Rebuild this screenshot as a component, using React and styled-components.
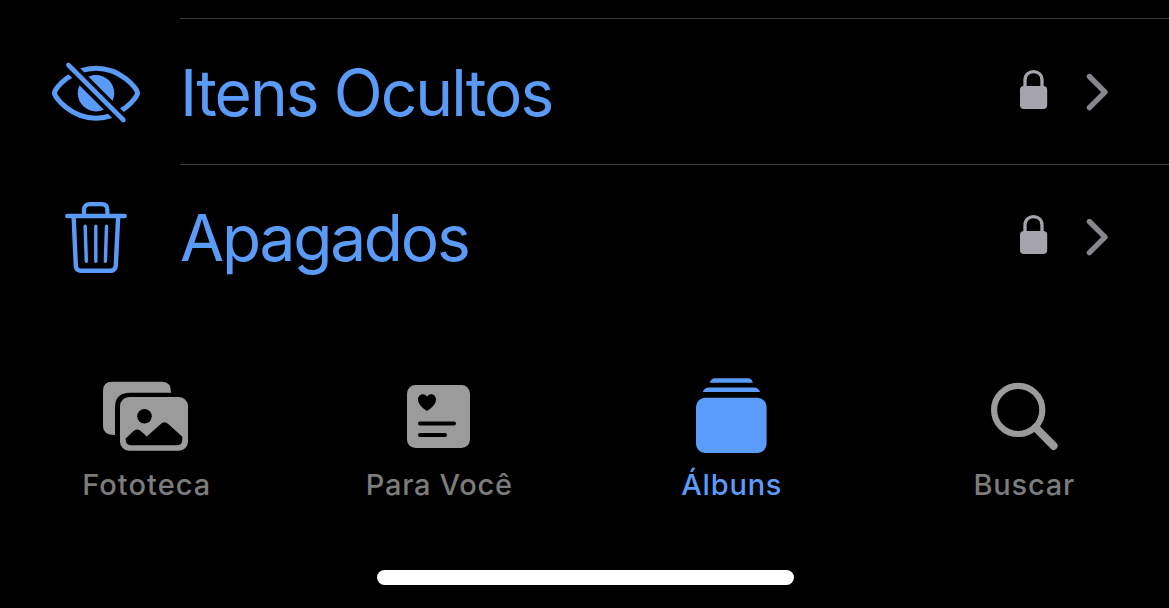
import React from "react";
import styled, { createGlobalStyle } from "styled-components";

const GlobalStyle = createGlobalStyle`
  body {
    margin: 0;
    background: #000;
    overflow: hidden;
  }
`;

const Screen = styled.div`
  display: flex;
  flex-direction: column;
  width: 1169px;
  height: 608px;
  overflow: hidden;
  background: #000;
  font-family: Inter, "Liberation Sans", sans-serif;
`;

const List = styled.div`
  height: 375px;
  padding-top: 18px;
  box-sizing: border-box;
`;

const Row = styled.div`
  display: flex;
  height: ${(props) => props.$height};
`;

const RowIcon = styled.div`
  display: flex;
  width: 180px;
  padding: 3px 0 0 48px;
  box-sizing: border-box;
  align-items: center;
`;

const RowBody = styled.div`
  display: flex;
  flex: 1;
  align-items: center;
  border-top: 1px solid #3a3a3c;
`;

const RowTitle = styled.div`
  flex: 1;
  font-size: 64px;
  line-height: 80px;
  letter-spacing: ${(props) => props.$spacing};
  padding-top: 3px;
  color: #5b9bf8;
  white-space: nowrap;
`;

const Accessory = styled.svg`
  display: block;
  margin-right: 55px;
`;

const TabBar = styled.div`
  display: grid;
  grid-template-columns: repeat(4, 292.5px);
  height: 195px;
`;

const Tab = styled.div`
  display: flex;
  flex-direction: column;
  align-items: center;
  color: ${(props) => (props.$active ? "#5b9bf9" : "#9b9b9b")};
`;

const TabLabel = styled.div`
  margin-top: 12px;
  font-size: 29px;
  line-height: 36px;
  letter-spacing: ${(props) => props.$spacing};
  margin-right: -1px;
  font-weight: 500;
  color: ${(props) => (props.$active ? "#5b9bf9" : "#7c7c7c")};
  white-space: nowrap;
`;

const HomeIndicator = styled.div`
  width: 417px;
  height: 15px;
  margin-left: 377px;
  border-radius: 8px;
  background: #fff;
`;

const Drawing = styled.svg`
  display: block;
`;

const HiddenIcon = () => (
  <Drawing width="96" height="80" viewBox="0 0 96 80" fill="none">
    <mask id="eyeCut">
      <rect width="96" height="80" fill="#fff" />
      <path d="M10 2L86 78" stroke="#000" strokeWidth="12.5" />
    </mask>
    <g mask="url(#eyeCut)">
      <path
        d="M6.5 40C6.5 35.5 23 15.2 48 15.2S89.5 35.5 89.5 40S73 65.2 48 65.2S6.5 44.5 6.5 40Z"
        stroke="#5b9bf8"
        strokeWidth="5"
      />
      <circle cx="48" cy="40.2" r="18.2" fill="#5b9bf8" />
    </g>
    <path d="M20.4 12L75.4 67" stroke="#5b9bf8" strokeWidth="4.6" strokeLinecap="round" />
  </Drawing>
);

const TrashIcon = () => (
  <Drawing width="96" height="80" viewBox="0 0 96 80" fill="none" stroke="#5b9bf8" strokeLinecap="round">
    <path d="M19.3 18H76.7" strokeWidth="4.4" />
    <path d="M36 18V12Q36 6.2 41.8 6.2H53.6Q59.4 6.2 59.4 12V18" strokeWidth="4.2" />
    <path
      d="M25.6 18L27.8 67.5Q28 72.8 33.4 72.8H62Q67.4 72.8 67.8 67.5L70.2 18"
      strokeWidth="4.4"
    />
    <path d="M37.2 28.2L38.3 63.2M47.8 28.2V63.2M58.5 28.2L57.4 63.2" strokeWidth="3.4" />
  </Drawing>
);

const LockAndChevron = () => (
  <Accessory width="94" height="50" viewBox="0 0 94 50" fill="none">
    <rect x="0" y="19" width="27.2" height="23" rx="4" fill="#a5a3ac" />
    <path d="M5 21V13.2C5 7.6 8.7 4.7 13.5 4.7S22 7.6 22 13.2V21" stroke="#a5a3ac" strokeWidth="3.3" />
    <path
      d="M69.4 9.5L85 25.2L69.4 40.6"
      stroke="#88868c"
      strokeWidth="5.4"
      strokeLinecap="round"
      strokeLinejoin="round"
    />
  </Accessory>
);

const LibraryIcon = () => (
  <Drawing width="96" height="80" viewBox="0 0 96 80" fill="currentColor">
    <path d="M14 6.7H64.5Q73 6.7 73 17.7H32Q17 17.7 17 32.5V60Q5 60 5 50.5V15.7Q5 6.7 14 6.7Z" />
    <rect x="22" y="22" width="68" height="53.7" rx="9" />
    <circle cx="46.5" cy="41.3" r="7.3" fill="#000" />
    <path
      d="M27.7 63.5L35.5 56Q38.8 53 42.2 55.6L48.8 61.4L62.5 49.2Q66.3 45.6 70.3 49L84.3 61.7V65Q84.3 70.2 79 70.2H33Q27.7 70.2 27.7 65Z"
      fill="#000"
    />
  </Drawing>
);

const ForYouIcon = () => (
  <Drawing width="96" height="80" viewBox="0 0 96 80" fill="currentColor">
    <rect x="16" y="10" width="63" height="63" rx="8.5" />
    <path
      d="M36 36C32.5 34 27 29.5 27 24.6C27 21.3 29.3 19.2 31.9 19.2C33.7 19.2 35.2 20.2 36 21.7C36.8 20.2 38.3 19.2 40.1 19.2C42.7 19.2 45 21.3 45 24.6C45 29.5 39.5 34 36 36Z"
      fill="#000"
    />
    <path d="M29 48.6H63M29 60.1H54" stroke="#000" strokeWidth="4" strokeLinecap="round" />
  </Drawing>
);

const AlbumsIcon = () => (
  <Drawing width="96" height="80" viewBox="0 0 96 80" fill="currentColor">
    <path d="M26.8 7.8Q28 3.2 32 3.2H65Q69 3.2 69.8 7.8Z" />
    <path d="M19.8 17Q21.2 12.4 26 12.4H71Q75.5 12.4 77 17Z" />
    <rect x="13" y="22.8" width="70.6" height="55.2" rx="9" />
  </Drawing>
);

const SearchIcon = () => (
  <Drawing width="96" height="80" viewBox="0 0 96 80" fill="none" stroke="currentColor">
    <circle cx="42.2" cy="34.9" r="24.1" strokeWidth="6.2" />
    <path d="M59.5 52.5L77.6 70.9" strokeWidth="8" strokeLinecap="round" />
  </Drawing>
);

const rows = [
  { title: "Itens Ocultos", icon: <HiddenIcon />, spacing: "-1.95px", height: "146px" },
  { title: "Apagados", icon: <TrashIcon />, spacing: "-2.25px", height: "144px" },
];

const tabs = [
  { label: "Fototeca", icon: <LibraryIcon />, spacing: "1.05px" },
  { label: "Para Você", icon: <ForYouIcon />, spacing: "0.7px" },
  { label: "Álbuns", icon: <AlbumsIcon />, spacing: "0.8px", active: true },
  { label: "Buscar", icon: <SearchIcon />, spacing: "0.8px" },
];

const App = () => {
  return (
    <>
      <GlobalStyle />
      <Screen>
        <List>
          {rows.map((row) => (
            <Row key={row.title} $height={row.height}>
              <RowIcon>{row.icon}</RowIcon>
              <RowBody>
                <RowTitle $spacing={row.spacing}>{row.title}</RowTitle>
                <LockAndChevron />
              </RowBody>
            </Row>
          ))}
        </List>
        <TabBar>
          {tabs.map((tab) => (
            <Tab key={tab.label} $active={tab.active}>
              {tab.icon}
              <TabLabel $active={tab.active} $spacing={tab.spacing}>
                {tab.label}
              </TabLabel>
            </Tab>
          ))}
        </TabBar>
        <HomeIndicator />
      </Screen>
    </>
  );
};

export default App;
